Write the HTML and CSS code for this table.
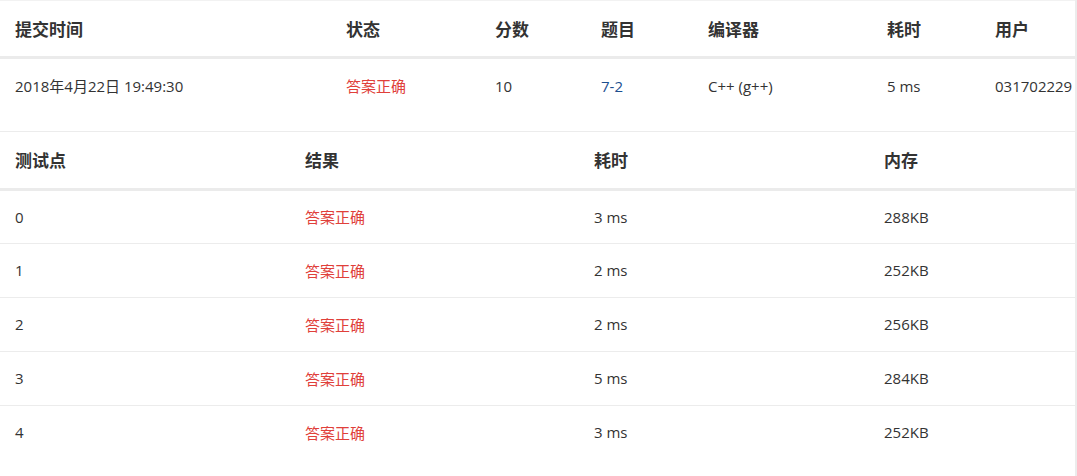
FILE: index.html
```html
<!DOCTYPE html>
<html lang="zh-CN">
<head>
<meta charset="utf-8">
<title>提交详情</title>
<link rel="stylesheet" href="styles.css">
</head>
<body>
<div class="frame">
  <table class="grid summary">
    <colgroup>
      <col class="c1"><col class="c2"><col class="c3"><col class="c4"><col class="c5"><col class="c6"><col class="c7">
    </colgroup>
    <thead>
      <tr><th>提交时间</th><th>状态</th><th>分数</th><th>题目</th><th>编译器</th><th>耗时</th><th>用户</th></tr>
    </thead>
    <tbody>
      <tr><td>2018年4月22日 19:49:30</td><td class="ok">答案正确</td><td>10</td><td><a class="link" href="#">7-2</a></td><td>C++ (g++)</td><td>5 ms</td><td>031702229</td></tr>
    </tbody>
  </table>

  <table class="grid cases">
    <colgroup>
      <col class="d1"><col class="d2"><col class="d3"><col class="d4">
    </colgroup>
    <thead>
      <tr><th>测试点</th><th>结果</th><th>耗时</th><th>内存</th></tr>
    </thead>
    <tbody>
      <tr><td>0</td><td class="ok">答案正确</td><td>3 ms</td><td>288KB</td></tr>
      <tr><td>1</td><td class="ok">答案正确</td><td>2 ms</td><td>252KB</td></tr>
      <tr><td>2</td><td class="ok">答案正确</td><td>2 ms</td><td>256KB</td></tr>
      <tr><td>3</td><td class="ok">答案正确</td><td>5 ms</td><td>284KB</td></tr>
      <tr class="last"><td>4</td><td class="ok">答案正确</td><td>3 ms</td><td>252KB</td></tr>
    </tbody>
  </table>
</div>
</body>
</html>
```

FILE: styles.css
```css
html, body {
  margin: 0;
  padding: 0;
  background: #fff;
}

body {
  font-family: "Open Sans", "Noto Sans CJK SC", sans-serif;
  color: #333;
  font-size: 15px;
}

.frame {
  width: 1075px;
  height: 476px;
  border-right: 2px solid #ececec;
  overflow: hidden;
}

.grid {
  border-collapse: collapse;
  table-layout: fixed;
  width: 1120px;
}

.grid th,
.grid td {
  text-align: left;
  padding: 0 0 0 15px;
  white-space: nowrap;
  vertical-align: middle;
}

.grid th {
  font-family: "Noto Sans CJK SC", sans-serif;
  font-weight: 700;
  font-size: 17px;
  color: #333;
}

.grid thead tr {
  border-bottom: 3px solid #ebebeb;
}

.summary {
  border-top: 1px solid #f2f2f2;
  margin-bottom: 18px;
}

.summary thead tr { height: 57px; }
.summary tbody tr { height: 55px; }

.summary .c1 { width: 331px; }
.summary .c2 { width: 149px; }
.summary .c3 { width: 106px; }
.summary .c4 { width: 107px; }
.summary .c5 { width: 179px; }
.summary .c6 { width: 108px; }
.summary .c7 { width: 140px; }

.cases {
  border-top: 1px solid #ececec;
}

.cases thead tr { height: 58px; }
.cases tbody tr {
  height: 54px;
  border-bottom: 1px solid #ececec;
}
.cases tbody tr.last { border-bottom: none; }

.cases .d1 { width: 290px; }
.cases .d2 { width: 289px; }
.cases .d3 { width: 290px; }
.cases .d4 { width: 251px; }

.ok {
  color: #e0403a;
}

.link {
  color: #1c4f8f;
  text-decoration: none;
}
```
